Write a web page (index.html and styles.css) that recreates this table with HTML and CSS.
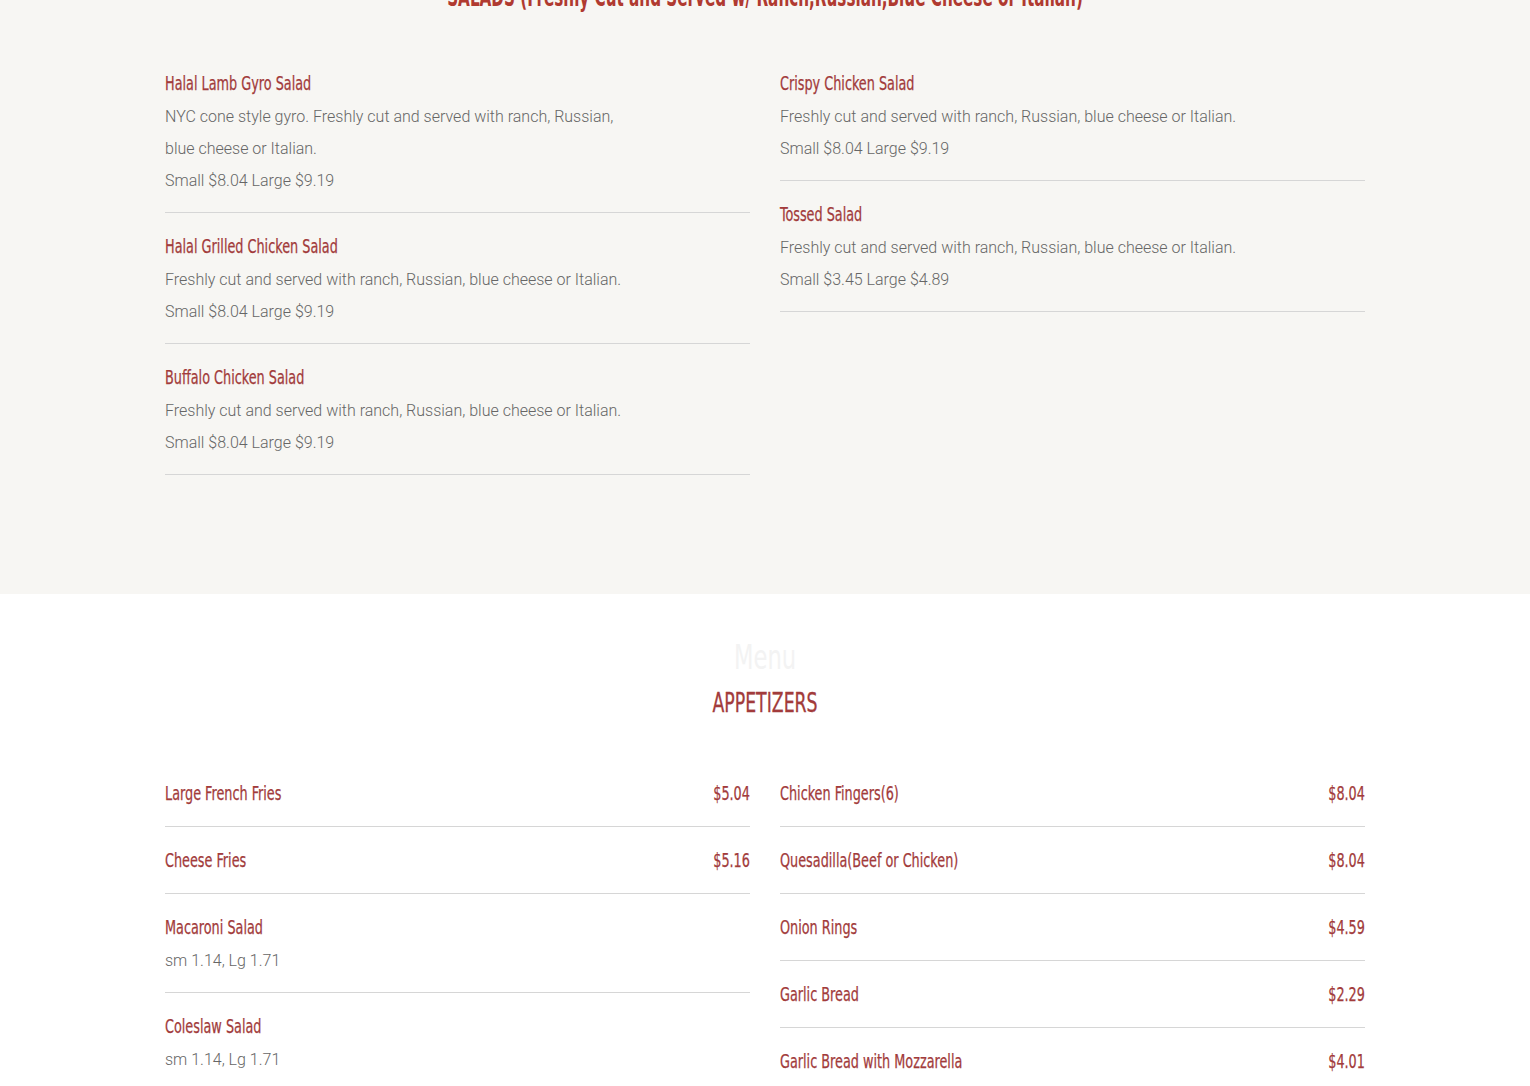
FILE: index.html
```html
<!DOCTYPE html>
<html lang="en">
<head>
<meta charset="utf-8">
<title>Menu</title>
<link rel="stylesheet" href="styles.css">
</head>
<body>
<section class="section section-tinted">
  <div class="container">
    <h2 class="category category-top"><span class="narrow">SALADS (Freshly Cut and Served w/ Ranch,Russian,Blue Cheese or Italian)</span></h2>
    <div class="grid">
      <div class="col">
        <div class="item">
          <div class="item-head"><span class="item-name">Halal Lamb Gyro Salad</span></div>
          <p class="item-desc">NYC cone style gyro. Freshly cut and served with ranch, Russian, blue cheese or Italian.</p>
          <p class="item-desc">Small $8.04 Large $9.19</p>
        </div>
        <div class="item">
          <div class="item-head"><span class="item-name">Halal Grilled Chicken Salad</span></div>
          <p class="item-desc">Freshly cut and served with ranch, Russian, blue cheese or Italian.</p>
          <p class="item-desc">Small $8.04 Large $9.19</p>
        </div>
        <div class="item">
          <div class="item-head"><span class="item-name">Buffalo Chicken Salad</span></div>
          <p class="item-desc">Freshly cut and served with ranch, Russian, blue cheese or Italian.</p>
          <p class="item-desc">Small $8.04 Large $9.19</p>
        </div>
      </div>
      <div class="col">
        <div class="item">
          <div class="item-head"><span class="item-name">Crispy Chicken Salad</span></div>
          <p class="item-desc">Freshly cut and served with ranch, Russian, blue cheese or Italian.</p>
          <p class="item-desc">Small $8.04 Large $9.19</p>
        </div>
        <div class="item">
          <div class="item-head"><span class="item-name">Tossed Salad</span></div>
          <p class="item-desc">Freshly cut and served with ranch, Russian, blue cheese or Italian.</p>
          <p class="item-desc">Small $3.45 Large $4.89</p>
        </div>
      </div>
    </div>
  </div>
</section>
<section class="section section-white">
  <div class="container">
    <div class="menu-label"><span class="narrow">Menu</span></div>
    <h2 class="category"><span class="narrow">APPETIZERS</span></h2>
    <div class="grid">
      <div class="col">
        <div class="item">
          <div class="item-head"><span class="item-name">Large French Fries</span><span class="item-price">$5.04</span></div>
        </div>
        <div class="item">
          <div class="item-head"><span class="item-name">Cheese Fries</span><span class="item-price">$5.16</span></div>
        </div>
        <div class="item">
          <div class="item-head"><span class="item-name">Macaroni Salad</span></div>
          <p class="item-desc">sm 1.14, Lg 1.71</p>
        </div>
        <div class="item">
          <div class="item-head"><span class="item-name">Coleslaw Salad</span></div>
          <p class="item-desc">sm 1.14, Lg 1.71</p>
        </div>
      </div>
      <div class="col">
        <div class="item">
          <div class="item-head"><span class="item-name">Chicken Fingers(6)</span><span class="item-price">$8.04</span></div>
        </div>
        <div class="item">
          <div class="item-head"><span class="item-name">Quesadilla(Beef or Chicken)</span><span class="item-price">$8.04</span></div>
        </div>
        <div class="item">
          <div class="item-head"><span class="item-name">Onion Rings</span><span class="item-price">$4.59</span></div>
        </div>
        <div class="item">
          <div class="item-head"><span class="item-name">Garlic Bread</span><span class="item-price">$2.29</span></div>
        </div>
        <div class="item">
          <div class="item-head"><span class="item-name">Garlic Bread with Mozzarella</span><span class="item-price">$4.01</span></div>
        </div>
      </div>
    </div>
  </div>
</section>
</body>
</html>
```

FILE: styles.css
```css
* { box-sizing: border-box; }
html, body { margin: 0; padding: 0; }
body {
  font-family: Roboto, "Liberation Sans", sans-serif;
  background: #ffffff;
  overflow: hidden;
}
.section-tinted {
  background: #f7f6f3;
  padding-bottom: 119px;
}
.section-white {
  background: #ffffff;
  padding-top: 40px;
}
.container {
  width: 1200px;
  margin: 0 auto;
}
.narrow {
  display: inline-block;
  white-space: nowrap;
  transform: scaleX(0.74);
  transform-origin: center;
}
.category {
  margin: 6px 0 0;
  text-align: center;
  font-family: "DejaVu Sans Condensed", "DejaVu Sans", sans-serif;
  font-weight: 400;
  font-size: 26px;
  line-height: 34px;
  color: #a23b3b;
  -webkit-text-stroke: 0.3px currentColor;
}
.category-top {
  margin-top: -20px;
  font-weight: 700;
  color: #b03a30;
  -webkit-text-stroke: 0;
}
.category-top .narrow { transform: scaleX(0.65); }
.menu-label {
  text-align: center;
  font-family: "DejaVu Sans Condensed", "DejaVu Sans", sans-serif;
  font-size: 34px;
  line-height: 46px;
  color: #f3f3f3;
}
.grid {
  display: grid;
  grid-template-columns: 1fr 1fr;
  column-gap: 30px;
  margin-top: 36px;
  align-items: start;
}
.section-white .grid { margin-top: 40px; }
.item {
  padding: 17px 0 15px;
  border-bottom: 1px solid #d6d6d6;
}
.item-head {
  display: flex;
  justify-content: space-between;
  align-items: baseline;
  line-height: 34px;
}
.item-name, .item-price {
  display: inline-block;
  white-space: nowrap;
  font-family: "DejaVu Sans Condensed", "DejaVu Sans", sans-serif;
  font-size: 19px;
  color: #a23b3b;
  -webkit-text-stroke: 0.25px currentColor;
  transform: translateY(-1px) scaleX(0.75);
  transform-origin: left center;
}
.item-price { transform-origin: right center; }
.item-desc {
  margin: 0;
  width: 80%;
  font-size: 16px;
  font-weight: 300;
  line-height: 32px;
  color: #666666;
}
```
